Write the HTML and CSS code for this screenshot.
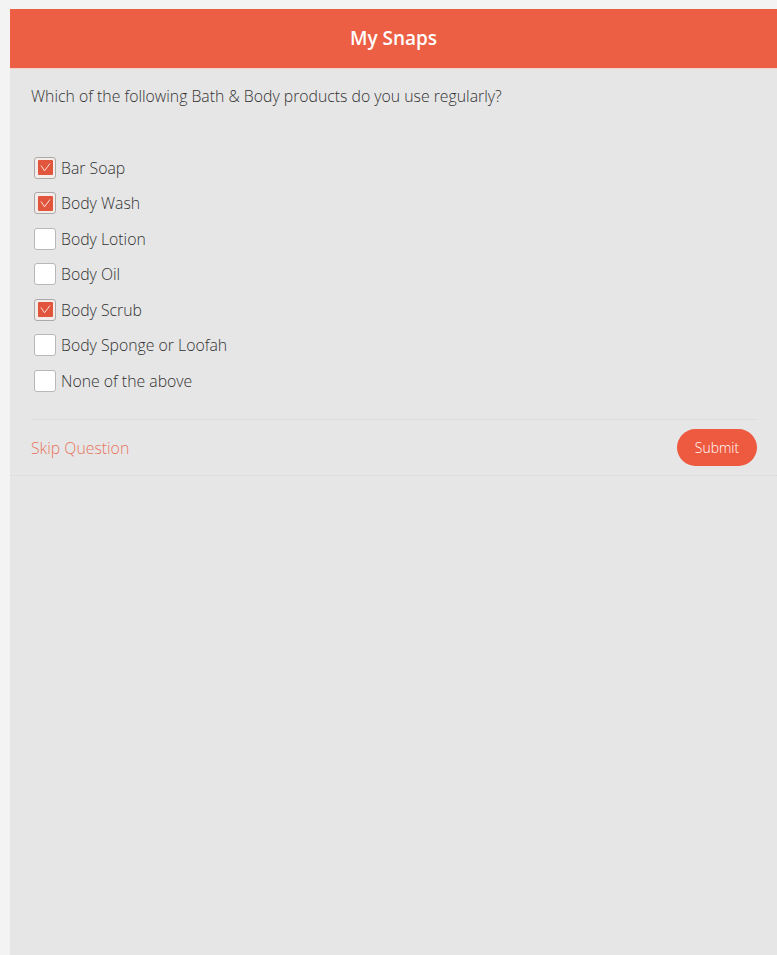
FILE: index.html
```html
<!DOCTYPE html>
<html lang="en">
<head>
    <meta charset="UTF-8">
    <meta name="viewport" content="width=device-width, initial-scale=1.0">
    <title>My Snaps</title>
    <link rel="stylesheet" href="styles.css">
</head>
<body>
    <div class="panel">
        <div class="header">My Snaps</div>

        <p class="question">Which of the following Bath &amp; Body products do you use regularly?</p>

        <ul class="options">
            <li class="option checked"><span class="box"><svg viewBox="0 0 15 15"><path d="M3 5.5 L6.5 10.8 L12 3.5"/></svg></span>Bar Soap</li>
            <li class="option checked"><span class="box"><svg viewBox="0 0 15 15"><path d="M3 5.5 L6.5 10.8 L12 3.5"/></svg></span>Body Wash</li>
            <li class="option"><span class="box"></span>Body Lotion</li>
            <li class="option"><span class="box"></span>Body Oil</li>
            <li class="option checked"><span class="box"><svg viewBox="0 0 15 15"><path d="M3 5.5 L6.5 10.8 L12 3.5"/></svg></span>Body Scrub</li>
            <li class="option"><span class="box"></span>Body Sponge or Loofah</li>
            <li class="option"><span class="box"></span>None of the above</li>
        </ul>

        <div class="footer">
            <a class="skip" href="#">Skip Question</a>
            <button class="submit" type="button">Submit</button>
        </div>
    </div>
</body>
</html>
```

FILE: styles.css
```css
body {
    font-family: 'Open Sans', 'Liberation Sans', sans-serif;
    background-color: #f3f3f3;
    margin: 0;
    padding: 9px 0 0 10px;
}

.panel {
    background: #e6e6e6;
    min-height: 946px;
}

.header {
    height: 60px;
    line-height: 59px;
    background-color: #ed5f44;
    border-bottom: 1px solid #f6d3c8;
    color: white;
    text-align: center;
    font-size: 19px;
    font-weight: 600;
    box-sizing: border-box;
}

.question {
    margin: 0;
    padding: 16px 20px 0 21px;
    font-size: 15.8px;
    line-height: 22px;
    font-weight: 300;
    color: #333;
}

.options {
    list-style: none;
    margin: 43px 0 0;
    padding: 0 0 0 24px;
}

.option {
    display: flex;
    align-items: center;
    height: 35.5px;
    font-size: 15.8px;
    font-weight: 300;
    color: #333;
}

.box {
    width: 22px;
    height: 22px;
    margin-right: 5px;
    border: 1px solid #b8b8b8;
    border-radius: 3px;
    background: white;
    box-sizing: border-box;
    display: flex;
    align-items: center;
    justify-content: center;
}

.box svg {
    width: 15px;
    height: 15px;
    background: #e2553d;
    border-radius: 1px;
}

.box path {
    fill: none;
    stroke: #fbe3dc;
    stroke-width: 1;
}

.checked .box {
    background: #f4ece9;
    border-color: #a9a9a9;
}

/* Pie con botones */
.footer {
    margin: 20px 20px 0 21px;
    border-top: 1px solid #dcdcdc;
    height: 56px;
    display: flex;
    align-items: center;
    justify-content: space-between;
    position: relative;
}

.footer::after {
    content: "";
    position: absolute;
    left: -21px;
    right: -20px;
    bottom: 0;
    border-bottom: 1px dotted #d8d8d8;
}

.skip {
    color: #e8745d;
    text-decoration: none;
    font-size: 15.8px;
    font-weight: 300;
}

.submit {
    width: 80px;
    height: 37px;
    border: none;
    border-radius: 19px;
    background-color: #ed5a40;
    color: white;
    font-family: inherit;
    font-size: 14px;
    font-weight: 300;
    cursor: pointer;
}
```
